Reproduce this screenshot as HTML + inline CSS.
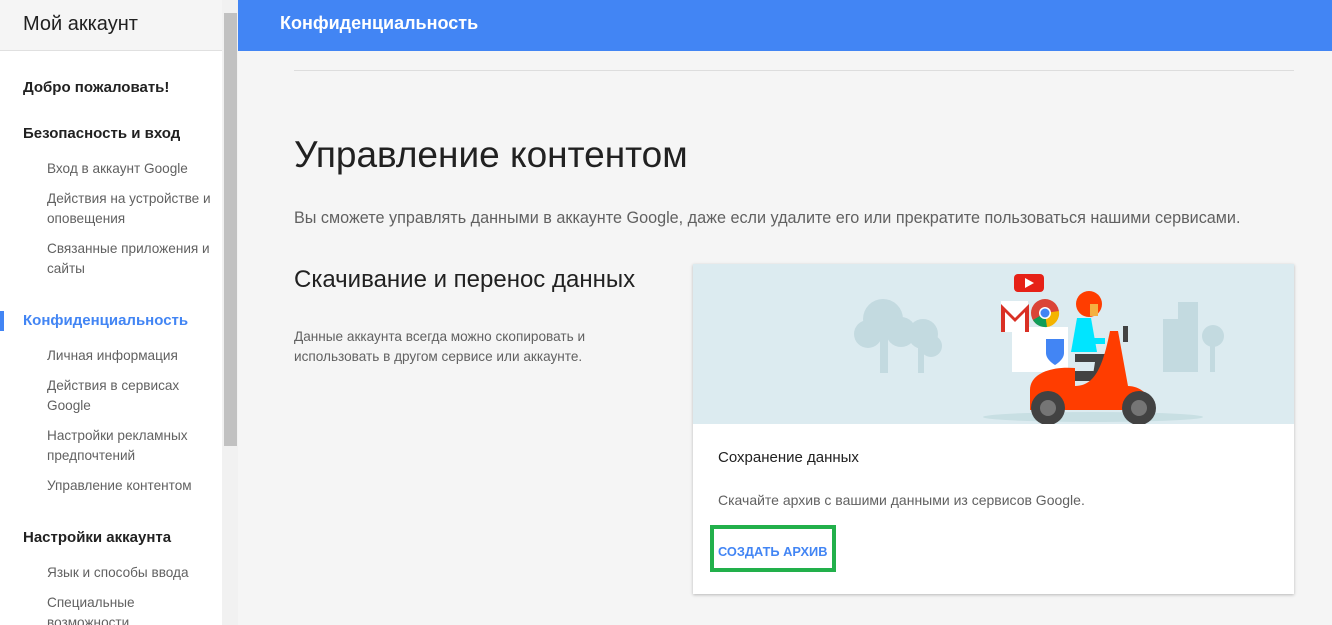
<!DOCTYPE html>
<html><head><meta charset="utf-8"><style>
*{margin:0;padding:0;box-sizing:border-box}
html,body{width:1332px;height:625px;overflow:hidden}
body{background:#f5f5f5;font-family:"Liberation Sans",Arial,sans-serif;position:relative}
.side{position:absolute;left:0;top:0;width:222px;height:625px;background:#fff}
.sh{height:51px;background:#f5f5f5;border-bottom:1px solid #e0e0e0;font-size:20px;color:#212121;padding:13px 0 0 23px}
.side .a{position:absolute;left:23px;font-size:15px;color:#212121;font-weight:bold}
.side .b{position:absolute;left:47px;font-size:13.6px;color:#616161;line-height:20px;white-space:nowrap}
.sb{position:absolute;left:222px;top:0;width:16px;height:625px;background:#f1f1f1}
.thumb{position:absolute;left:224px;top:13px;width:13px;height:433px;background:#c1c1c1}
.top{position:absolute;left:238px;top:0;right:0;height:51px;background:#4285f4;color:#fff;font-size:18px;font-weight:bold;padding:13px 0 0 42px}
.hr{position:absolute;left:294px;top:70px;width:1000px;height:1px;background:#ddd}
.card{position:absolute;left:693px;top:264px;width:601px;height:330px;background:#fff;box-shadow:0 1px 3px rgba(0,0,0,.25)}
</style></head><body>
<div class="side">
<div class="sh">Мой аккаунт</div>
<div class="a" style="top:79px">Добро пожаловать!</div>
<div class="a" style="top:125px">Безопасность и вход</div>
<div class="b" style="top:159px">Вход в аккаунт Google</div>
<div class="b" style="top:189px">Действия на устройстве и<br>оповещения</div>
<div class="b" style="top:239px">Связанные приложения и<br>сайты</div>
<div style="position:absolute;left:0;top:311px;width:4px;height:20px;background:#4285f4"></div>
<div class="a" style="top:312px;color:#4285f4">Конфиденциальность</div>
<div class="b" style="top:346px">Личная информация</div>
<div class="b" style="top:376px">Действия в сервисах<br>Google</div>
<div class="b" style="top:426px">Настройки рекламных<br>предпочтений</div>
<div class="b" style="top:476px">Управление контентом</div>
<div class="a" style="top:529px">Настройки аккаунта</div>
<div class="b" style="top:563px">Язык и способы ввода</div>
<div class="b" style="top:593px">Специальные<br>возможности</div>
</div>
<div class="sb"></div><div class="thumb"></div>
<div class="top">Конфиденциальность</div>
<div class="hr"></div>
<div style="position:absolute;left:294px;top:134px;font-size:37px;color:#212121">Управление контентом</div>
<div style="position:absolute;left:294px;top:209px;font-size:16.2px;color:#616161;white-space:nowrap">Вы сможете управлять данными в аккаунте Google, даже если удалите его или прекратите пользоваться нашими сервисами.</div>
<div style="position:absolute;left:294px;top:266px;font-size:24px;color:#212121">Скачивание и перенос данных</div>
<div style="position:absolute;left:294px;top:327px;font-size:13.6px;color:#616161;line-height:20px">Данные аккаунта всегда можно скопировать и<br>использовать в другом сервисе или аккаунте.</div>
<div class="card">
<svg width="601" height="160" style="display:block">
<rect width="601" height="160" fill="#dcebf0"/>
<g fill="#c3dae0">
<circle cx="190" cy="55" r="20"/><circle cx="175" cy="70" r="14"/><circle cx="208" cy="68" r="15"/><rect x="187" y="65" width="8" height="44"/>
<circle cx="230" cy="70" r="15"/><circle cx="238" cy="82" r="11"/><rect x="225" y="80" width="6" height="29"/>
<rect x="470" y="55" width="28" height="53"/><rect x="485" y="38" width="20" height="70"/><circle cx="520" cy="72" r="11"/><rect x="517" y="75" width="5" height="33"/>
</g>
<ellipse cx="400" cy="153" rx="110" ry="5" fill="#c8dfe3"/>
<rect x="319" y="63" width="56" height="45" fill="#fff"/>
<path d="M353 75h18v14c0 7-9 12-9 12s-9-5-9-12z" fill="#4285f4"/>
<rect x="308" y="37" width="27" height="31" fill="#fff"/><path d="M308 40v28h4V48l10 10 10-10v20h4V40l-14 14z" fill="#d93025"/>
<rect x="321" y="10" width="30" height="18" rx="4" fill="#e62117"/><path d="M332 14l9 5-9 5z" fill="#fff"/>
<circle cx="352" cy="49" r="14" fill="#db4437"/><path d="M352 49L340 56a14 14 0 0 0 14 7z" fill="#0f9d58"/><path d="M352 49l14-2a14 14 0 0 1-12 16z" fill="#f4b400"/><circle cx="352" cy="49" r="6" fill="#fff"/><circle cx="352" cy="49" r="4.5" fill="#4285f4"/>
<circle cx="396" cy="40" r="13" fill="#ff3d00"/><path d="M397 40h8v12h-8z" fill="#f5b041"/>
<path d="M384 54h14l6 34h-26z" fill="#00e5ff"/><path d="M396 74h16v6h-16z" fill="#00e5ff"/>
<path d="M382 90h32l-8 34h-8l4-26h-20z" fill="#424242"/>
<rect x="355" y="107" width="50" height="10" rx="5" fill="#424242"/>
<path d="M337 146v-20c0-16 20-24 45-22v18c20 0 28-20 35-55h8l10 55c12 0 25 10 25 24z" fill="#ff3d00"/>
<rect x="430" y="62" width="5" height="16" fill="#424242"/>
<circle cx="355" cy="144" r="17" fill="#424242"/><circle cx="355" cy="144" r="8" fill="#757575"/>
<circle cx="446" cy="144" r="17" fill="#424242"/><circle cx="446" cy="144" r="8" fill="#757575"/>
</svg>
<div style="position:absolute;left:25px;top:185px;font-size:15px;color:#212121">Сохранение данных</div>
<div style="position:absolute;left:25px;top:228px;font-size:14px;color:#616161">Скачайте архив с вашими данными из сервисов Google.</div>
<div style="position:absolute;left:17px;top:261px;width:126px;height:47px;border:4px solid #22b04b"></div>
<div style="position:absolute;left:25px;top:280px;font-size:12.8px;font-weight:bold;color:#4285f4">СОЗДАТЬ АРХИВ</div>
</div>
</body></html>
